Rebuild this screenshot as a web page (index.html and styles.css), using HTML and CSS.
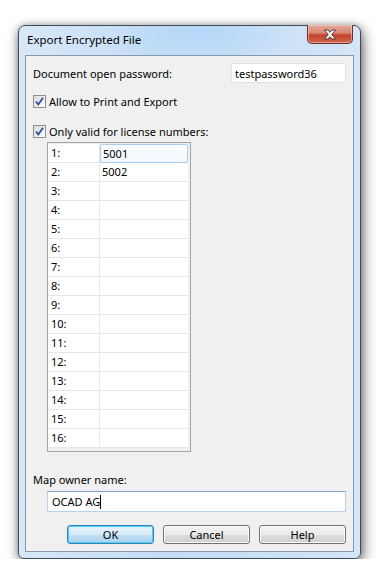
FILE: index.html
```html
<!DOCTYPE html>
<html lang="en">
<head>
  <meta charset="UTF-8" />
  <title>Export Encrypted File</title>
  <link rel="stylesheet" href="styles.css">
</head>
<body>

  <!-- Dialog window -->
  <div class="window">

    <!-- Title bar -->
    <div class="titlebar">
      <span class="title">Export Encrypted File</span>
      <button class="close" title="Close">
        <svg width="16" height="11" viewBox="0 0 16 11">
          <path d="M2.5 1 L6 1 L8 3.3 L10 1 L13.5 1 L9.8 5.5 L13.5 10 L10 10 L8 7.7 L6 10 L2.5 10 L6.2 5.5 Z" fill="#fff" stroke="#4a3a3a" stroke-width="1" stroke-linejoin="round"/>
        </svg>
      </button>
    </div>

    <!-- Client area -->
    <div class="client">

      <div class="row-password">
        <label>Document open password:</label>
        <input type="text" class="field pw" value="testpassword36" />
      </div>

      <label class="check first">
        <span class="box">
          <svg width="13" height="13" viewBox="0 0 13 13"><path d="M3 6.5 L5.3 9.5 L10 2.8" fill="none" stroke="#2d4f9c" stroke-width="1.8"/></svg>
        </span>
        Allow to Print and Export
      </label>

      <label class="check second">
        <span class="box">
          <svg width="13" height="13" viewBox="0 0 13 13"><path d="M3 6.5 L5.3 9.5 L10 2.8" fill="none" stroke="#2d4f9c" stroke-width="1.8"/></svg>
        </span>
        Only valid for license numbers:
      </label>

      <div class="grid" id="grid"></div>

      <div class="owner-label">Map owner name:</div>
      <div class="owner-field">OCAD AG<span class="caret"></span></div>

      <div class="buttons">
        <button class="btn default">OK</button>
        <button class="btn">Cancel</button>
        <button class="btn">Help</button>
      </div>

    </div>
  </div>

  <script>
    const grid = document.getElementById('grid');
    const values = ['5001', '5002'];

    for (let i = 1; i <= 16; i++) {
      const num = document.createElement('div');
      num.className = 'cell num';
      num.textContent = i + ':';

      const val = document.createElement('div');
      val.className = i === 1 ? 'cell val active' : 'cell val';
      val.textContent = values[i - 1] || '';

      grid.appendChild(num);
      grid.appendChild(val);
    }
  </script>
</body>
</html>
```

FILE: styles.css
```css
body {
  margin: 0;
  padding: 25px 0 0 18px;
  background: #fff;
  font-family: "Noto Sans", "Open Sans", sans-serif;
  font-size: 11px;
  color: #000;
}

.window {
  box-sizing: border-box;
  width: 343px;
  height: 534px;
  border: 1px solid #3e4b5a;
  border-radius: 7px 7px 6px 6px;
  background:
    radial-gradient(ellipse 90px 30px at 180px 8px, rgba(180, 215, 250, 0.9), rgba(180, 215, 250, 0) 100%),
    linear-gradient(90deg, #d8e8f8 0%, #c4ddf5 40%, #c6def5 60%, #d4e6f8 100%);
  box-shadow: 2px 5px 14px rgba(0, 0, 0, 0.55), 0 0 6px rgba(0, 0, 0, 0.25);
  padding: 0 6px 6px 6px;
}

.titlebar {
  height: 29px;
  display: flex;
  justify-content: space-between;
  align-items: flex-start;
}

.title {
  margin: 6px 0 0 2px;
  font-size: 11.5px;
  line-height: 16px;
}

.close {
  width: 46px;
  height: 19px;
  margin: -1px 1px 0 0;
  padding: 0;
  border: 1px solid #6b2d27;
  border-top: none;
  border-radius: 0 0 5px 5px;
  background: linear-gradient(#e4a89b 0%, #d98670 45%, #c3412a 55%, #d0674d 100%);
  box-shadow: inset 0 0 0 1px rgba(255, 220, 210, 0.5);
  display: flex;
  align-items: center;
  justify-content: center;
}

.client {
  box-sizing: border-box;
  height: 497px;
  border: 1px solid #8898ab;
  background: #f0f0f0;
  padding: 0 7px;
  display: flex;
  flex-direction: column;
}

.row-password {
  display: flex;
  justify-content: space-between;
  align-items: center;
  margin-top: 7px;
  height: 20px;
}

.field {
  box-sizing: border-box;
  height: 20px;
  background: #fff;
  font: inherit;
  padding: 0 3px;
}

.pw {
  width: 115px;
  border: 1px solid #e0e3e8;
}

.check {
  display: flex;
  align-items: center;
  gap: 3px;
  height: 15px;
}

.check.first {
  margin-top: 11px;
}

.check.second {
  margin-top: 15px;
}

.box {
  box-sizing: border-box;
  width: 13px;
  height: 13px;
  border: 1px solid #8f8f8f;
  background: linear-gradient(135deg, #dcdcdc, #fdfdfd);
  display: flex;
  align-items: center;
  justify-content: center;
}

.box svg {
  margin: -1px;
}

.grid {
  box-sizing: border-box;
  margin: 3px 0 0 14px;
  width: 144px;
  height: 310px;
  border: 1px solid #a5a5a5;
  padding: 1px 2px 3px 0;
  background: #f0f0f0;
  display: grid;
  grid-template-columns: 52px 88px;
  grid-auto-rows: 19px;
}

.cell {
  box-sizing: border-box;
  background: #fff;
  border-bottom: 1px solid #e6e6e6;
  line-height: 18px;
}

.num {
  padding-left: 3px;
  border-right: 1px solid #e6e6e6;
}

.val {
  padding-left: 2px;
}

.val.active {
  border: 1px solid #a7cff0;
  border-radius: 2px;
  background: linear-gradient(#fbfdff, #f1f8fe);
}

.owner-label {
  margin-top: 20px;
  line-height: 16px;
}

.owner-field {
  box-sizing: border-box;
  margin: 3px 0 0 14px;
  height: 21px;
  border: 1px solid #b8d2ea;
  border-top-color: #7fa6cc;
  background: #fff;
  padding: 0 4px;
  line-height: 19px;
}

.caret {
  display: inline-block;
  width: 1px;
  height: 14px;
  background: #000;
  vertical-align: -3px;
}

.buttons {
  display: flex;
  justify-content: flex-end;
  gap: 9px;
  margin-top: 13px;
}

.btn {
  box-sizing: border-box;
  width: 87px;
  height: 19px;
  padding: 0;
  border: 1px solid #707070;
  border-radius: 3px;
  font: inherit;
  color: #000;
  background: linear-gradient(#f2f2f2 0%, #ebebeb 50%, #dddddd 51%, #cfcfcf 100%);
  box-shadow: inset 0 0 0 1px #fbfbfb;
}

.btn.default {
  border-color: #3c7fb1;
  background: linear-gradient(#e6f3fb 0%, #d6ebf8 50%, #bfe0f4 51%, #a9d3ef 100%);
  box-shadow: inset 0 0 0 1px #48d0f6;
}
```
